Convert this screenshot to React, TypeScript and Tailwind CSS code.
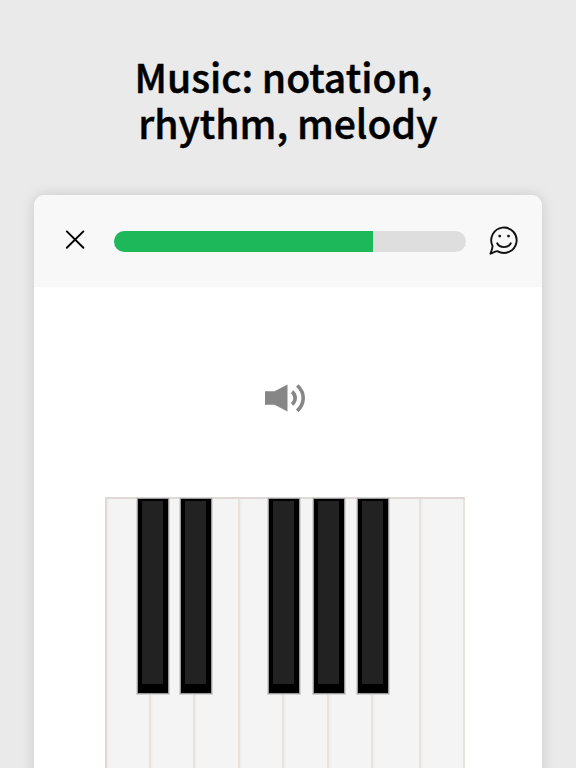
const whiteKeys = [
  "w-[44px]",
  "w-[44px]",
  "w-[45px]",
  "w-[44px]",
  "w-[45px]",
  "w-[44px]",
  "w-[48px]",
  "w-[44px]",
];

const blackKeys = [
  "left-[31px]",
  "left-[74px]",
  "left-[162px]",
  "left-[207px]",
  "left-[251px]",
];

function Header() {
  return (
    <header className="flex h-[92px] shrink-0 items-start rounded-t-[11px] bg-[#f8f8f8]">
      <button type="button" aria-label="Close" className="mt-[35px] ml-[31px]">
        <svg
          width="20"
          height="20"
          viewBox="0 0 20 20"
          fill="none"
          stroke="#000"
          strokeWidth="1.9"
          strokeLinecap="round"
        >
          <path d="M1.8 1.4 18.4 17.8M18.4 1.4 1.8 17.8" />
        </svg>
      </button>
      <div className="mt-[35.4px] ml-[28.5px] h-[21.4px] w-[352px] overflow-hidden rounded-full bg-[#dedede]">
        <div className="h-full w-[259px] bg-[#1cb85a]" />
      </div>
      <button type="button" aria-label="Feedback" className="mt-[30px] ml-[22px]">
        <svg
          width="31"
          height="31"
          viewBox="0 0 31 31"
          fill="none"
          stroke="#111"
          strokeWidth="1.9"
          strokeLinecap="round"
          strokeLinejoin="round"
        >
          <path d="M4.5 20.8A12.7 12.7 0 1 1 9.3 26.1C7 26.3 4.8 27.7 2.4 28.7C3.4 26.3 4.7 23.4 4.5 20.8Z" />
          <path d="M9.2 18.3C11.8 23.4 20.2 23.4 22.8 18.3" />
          <circle cx="11.7" cy="11.1" r="1.4" fill="#111" stroke="none" />
          <circle cx="20.5" cy="11.1" r="1.4" fill="#111" stroke="none" />
        </svg>
      </button>
    </header>
  );
}

function Piano() {
  return (
    <div className="relative mt-[82px] ml-[71px] flex h-[320px] w-[360px] shrink-0 border-t-2 border-l-2 border-[#e1d8d5] bg-[#f4f4f4]">
      {whiteKeys.map((width, i) => (
        <div
          key={i}
          className={`${width} shrink-0 border-r-2 border-[#e8e2df] bg-[#f4f4f4] shadow-[inset_2px_0_2px_rgba(0,0,0,0.025)] last:border-[#d9cac6]`}
        />
      ))}
      {blackKeys.map((left) => (
        <div
          key={left}
          className={`${left} absolute top-0 h-[194px] w-[30px] border-t-[2px] border-r-[5px] border-b-[9px] border-l-[4px] border-black bg-[#222] shadow-[0_0_0_1px_#999,0_0_0_2px_#d5d5d5]`}
        />
      ))}
    </div>
  );
}

export default function App() {
  return (
    <div className="flex h-[768px] w-[576px] flex-col overflow-hidden bg-[#eaeaea]">
      <h1 className="mt-[53px] pr-[9px] text-center font-['Noto_Sans_CJK_SC',sans-serif] text-[39.1px] leading-[46px] font-medium whitespace-pre text-black [-webkit-text-stroke:0.5px_#000]">
        {"Music: notation,\n rhythm, melody"}
      </h1>
      <main className="mt-[50.2px] ml-[34.4px] flex h-[620px] w-[507.6px] shrink-0 flex-col rounded-[11px] bg-white shadow-[0_0_14px_rgba(0,0,0,0.14)]">
        <Header />
        <button
          type="button"
          aria-label="Play sound"
          className="mt-[94px] ml-[230px] h-[34px] w-[44px] shrink-0"
        >
          <svg width="44" height="34" viewBox="0 0 44 34" fill="none">
            <path d="M1 10.2h9.5L23.5 3.5v27L10.5 23.8H1Z" fill="#868686" />
            <path
              d="M28 10.8C32.2 14 32.2 20 28 23.4M33.2 4.5C41.2 11.5 41.2 22.5 33.2 29.9"
              stroke="#868686"
              strokeWidth="3.6"
            />
          </svg>
        </button>
        <Piano />
      </main>
    </div>
  );
}
